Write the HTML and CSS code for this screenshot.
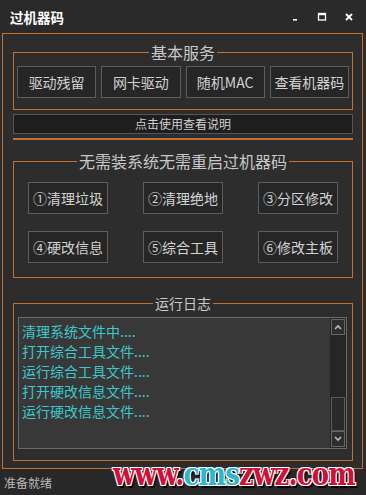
FILE: index.html
```html
<!DOCTYPE html>
<html lang="zh-CN">
<head>
    <meta charset="UTF-8">
    <meta name="viewport" content="width=device-width, initial-scale=1.0">
    <title>过机器码</title>
    <link rel="stylesheet" href="styles.css">
</head>
<body>
    <header class="titlebar">
        <span class="title">过机器码</span>
        <div class="controls">
            <span class="ctrl">
                <svg width="10" height="10" viewBox="0 0 10 10"><rect x="3" y="7" width="4" height="1.6" fill="#fff"/></svg>
            </span>
            <span class="ctrl">
                <svg width="10" height="10" viewBox="0 0 10 10"><rect x="1.5" y="1.5" width="7" height="6.5" fill="none" stroke="#fff" stroke-width="1.3"/><rect x="1" y="1" width="8" height="2.2" fill="#fff"/></svg>
            </span>
            <span class="ctrl">
                <svg width="10" height="10" viewBox="0 0 10 10"><path d="M2 2 L8 8 M8 2 L2 8" stroke="#fff" stroke-width="1.8"/></svg>
            </span>
        </div>
    </header>

    <main class="main">
        <section class="group">
            <div class="legend">基本服务</div>
            <div class="basic-grid">
                <button class="btn">驱动残留</button>
                <button class="btn">网卡驱动</button>
                <button class="btn">随机MAC</button>
                <button class="btn">查看机器码</button>
            </div>
        </section>

        <div class="help-bar">点击使用查看说明</div>
        <div class="separator"></div>

        <section class="group group-tools">
            <div class="legend">无需装系统无需重启过机器码</div>
            <div class="tools-grid">
                <button class="btn">①清理垃圾</button>
                <button class="btn">②清理绝地</button>
                <button class="btn">③分区修改</button>
                <button class="btn">④硬改信息</button>
                <button class="btn">⑤综合工具</button>
                <button class="btn">⑥修改主板</button>
            </div>
        </section>

        <section class="group group-log">
            <div class="legend legend-small">运行日志</div>
            <div class="log">
                <div class="log-lines">
                    <div>清理系统文件中....</div>
                    <div>打开综合工具文件....</div>
                    <div>运行综合工具文件....</div>
                    <div>打开硬改信息文件....</div>
                    <div>运行硬改信息文件....</div>
                </div>
                <div class="scrollbar">
                    <div class="sb-btn">
                        <svg width="10" height="8" viewBox="0 0 10 8"><path d="M2 6 L5 3 L8 6" fill="none" stroke="#bbb" stroke-width="1.6"/></svg>
                    </div>
                    <div class="sb-track">
                        <div class="sb-thumb"></div>
                    </div>
                    <div class="sb-btn">
                        <svg width="10" height="8" viewBox="0 0 10 8"><path d="M2 2 L5 5 L8 2" fill="none" stroke="#bbb" stroke-width="1.6"/></svg>
                    </div>
                </div>
            </div>
        </section>
    </main>

    <footer class="statusbar">准备就绪</footer>

    <div class="watermark">www.<span class="wm-blue">cms</span>zwz.com</div>
</body>
</html>
```

FILE: styles.css
```css
:root {
    --orange: #c4702e;
    --bg: #2d2d2d;
    --btn-border: #5c5c5c;
    --text: #d2d2d2;
}

* {
    margin: 0;
    padding: 0;
    box-sizing: border-box;
}

body {
    position: relative;
    width: 366px;
    height: 495px;
    overflow: hidden;
    background: var(--bg);
    font-family: "Noto Sans CJK SC", "Microsoft YaHei", sans-serif;
    color: var(--text);
}

/* title bar */
.titlebar {
    height: 33px;
    display: flex;
    align-items: center;
    padding: 0 4px 0 10px;
    background: #2a2a2a;
}

.title {
    font-size: 13.5px;
    font-weight: bold;
    color: #fff;
}

.controls {
    margin-left: auto;
    display: flex;
}

.ctrl {
    width: 27px;
    display: flex;
    justify-content: center;
}

/* main frame */
.main {
    height: 436px;
    margin: 0 3px 0 2px;
    padding: 18px 9px 0 10px;
    border: 1px solid var(--orange);
}

.group {
    border: 1px solid var(--orange);
}

.legend {
    display: table;
    margin: -10px auto 0;
    padding: 0 2px;
    background: var(--bg);
    font-size: 16px;
    line-height: 18px;
    color: #c8c8c8;
}

.legend-small {
    font-size: 14px;
}

.btn {
    height: 32px;
    background: #262626;
    border: 1px solid var(--btn-border);
    color: var(--text);
    font-family: inherit;
    font-size: 14px;
    white-space: nowrap;
}

.basic-grid {
    display: grid;
    grid-template-columns: repeat(4, 1fr);
    gap: 5px;
    margin-top: 5px;
    padding: 0 3px 11px;
}

.help-bar {
    height: 20px;
    margin-top: 4px;
    background: #1e1e1e;
    border: 1px solid #555;
    font-size: 12px;
    line-height: 18px;
    text-align: center;
    color: #cfcfcf;
}

.separator {
    height: 2px;
    margin-top: 4px;
    background: var(--orange);
}

.group-tools {
    margin-top: 21px;
}

.tools-grid {
    display: grid;
    grid-template-columns: repeat(3, 80px);
    column-gap: 35px;
    row-gap: 17px;
    margin-top: 12px;
    padding: 0 15px 14px 14px;
}

.group-log {
    margin-top: 25px;
}

/* log box */
.log {
    height: 132px;
    margin: 5px 5px 11px 4px;
    display: flex;
    background: #383838;
    border: 1px solid #6a6a6a;
}

.log-lines {
    flex: 1;
    padding: 3px 0 0 3px;
    font-size: 14px;
    line-height: 20px;
    color: #3cc8cc;
}

.scrollbar {
    width: 16px;
    padding: 1px;
    display: flex;
    flex-direction: column;
    background: #262626;
}

.sb-btn {
    height: 16px;
    display: flex;
    align-items: center;
    justify-content: center;
    border: 1px solid #666;
    background: #2e2e2e;
}

.sb-track {
    flex: 1;
    display: flex;
    flex-direction: column;
    justify-content: flex-end;
}

.sb-thumb {
    height: 34px;
    border: 1px solid #5a5a5a;
    background: #2a2a2a;
}

/* status bar */
.statusbar {
    height: 26px;
    padding: 2px 0 0 4px;
    font-size: 12px;
    line-height: 24px;
    color: #b8b8b8;
    background: #282828;
}

/* watermark over the bottom right */
.watermark {
    position: absolute;
    left: 113px;
    top: 464px;
    font-family: "DejaVu Serif", serif;
    font-weight: bold;
    font-size: 26px;
    line-height: 26px;
    letter-spacing: -0.8px;
    transform: scaleY(1.2);
    transform-origin: left bottom;
    color: #d01038;
    text-shadow: 1px 1px 0 #fff, -1px -1px 0 #fff, 1px -1px 0 #fff, -1px 1px 0 #fff, 2px 2px 1px #000;
}

.wm-blue {
    color: #2cb6d0;
}
```
